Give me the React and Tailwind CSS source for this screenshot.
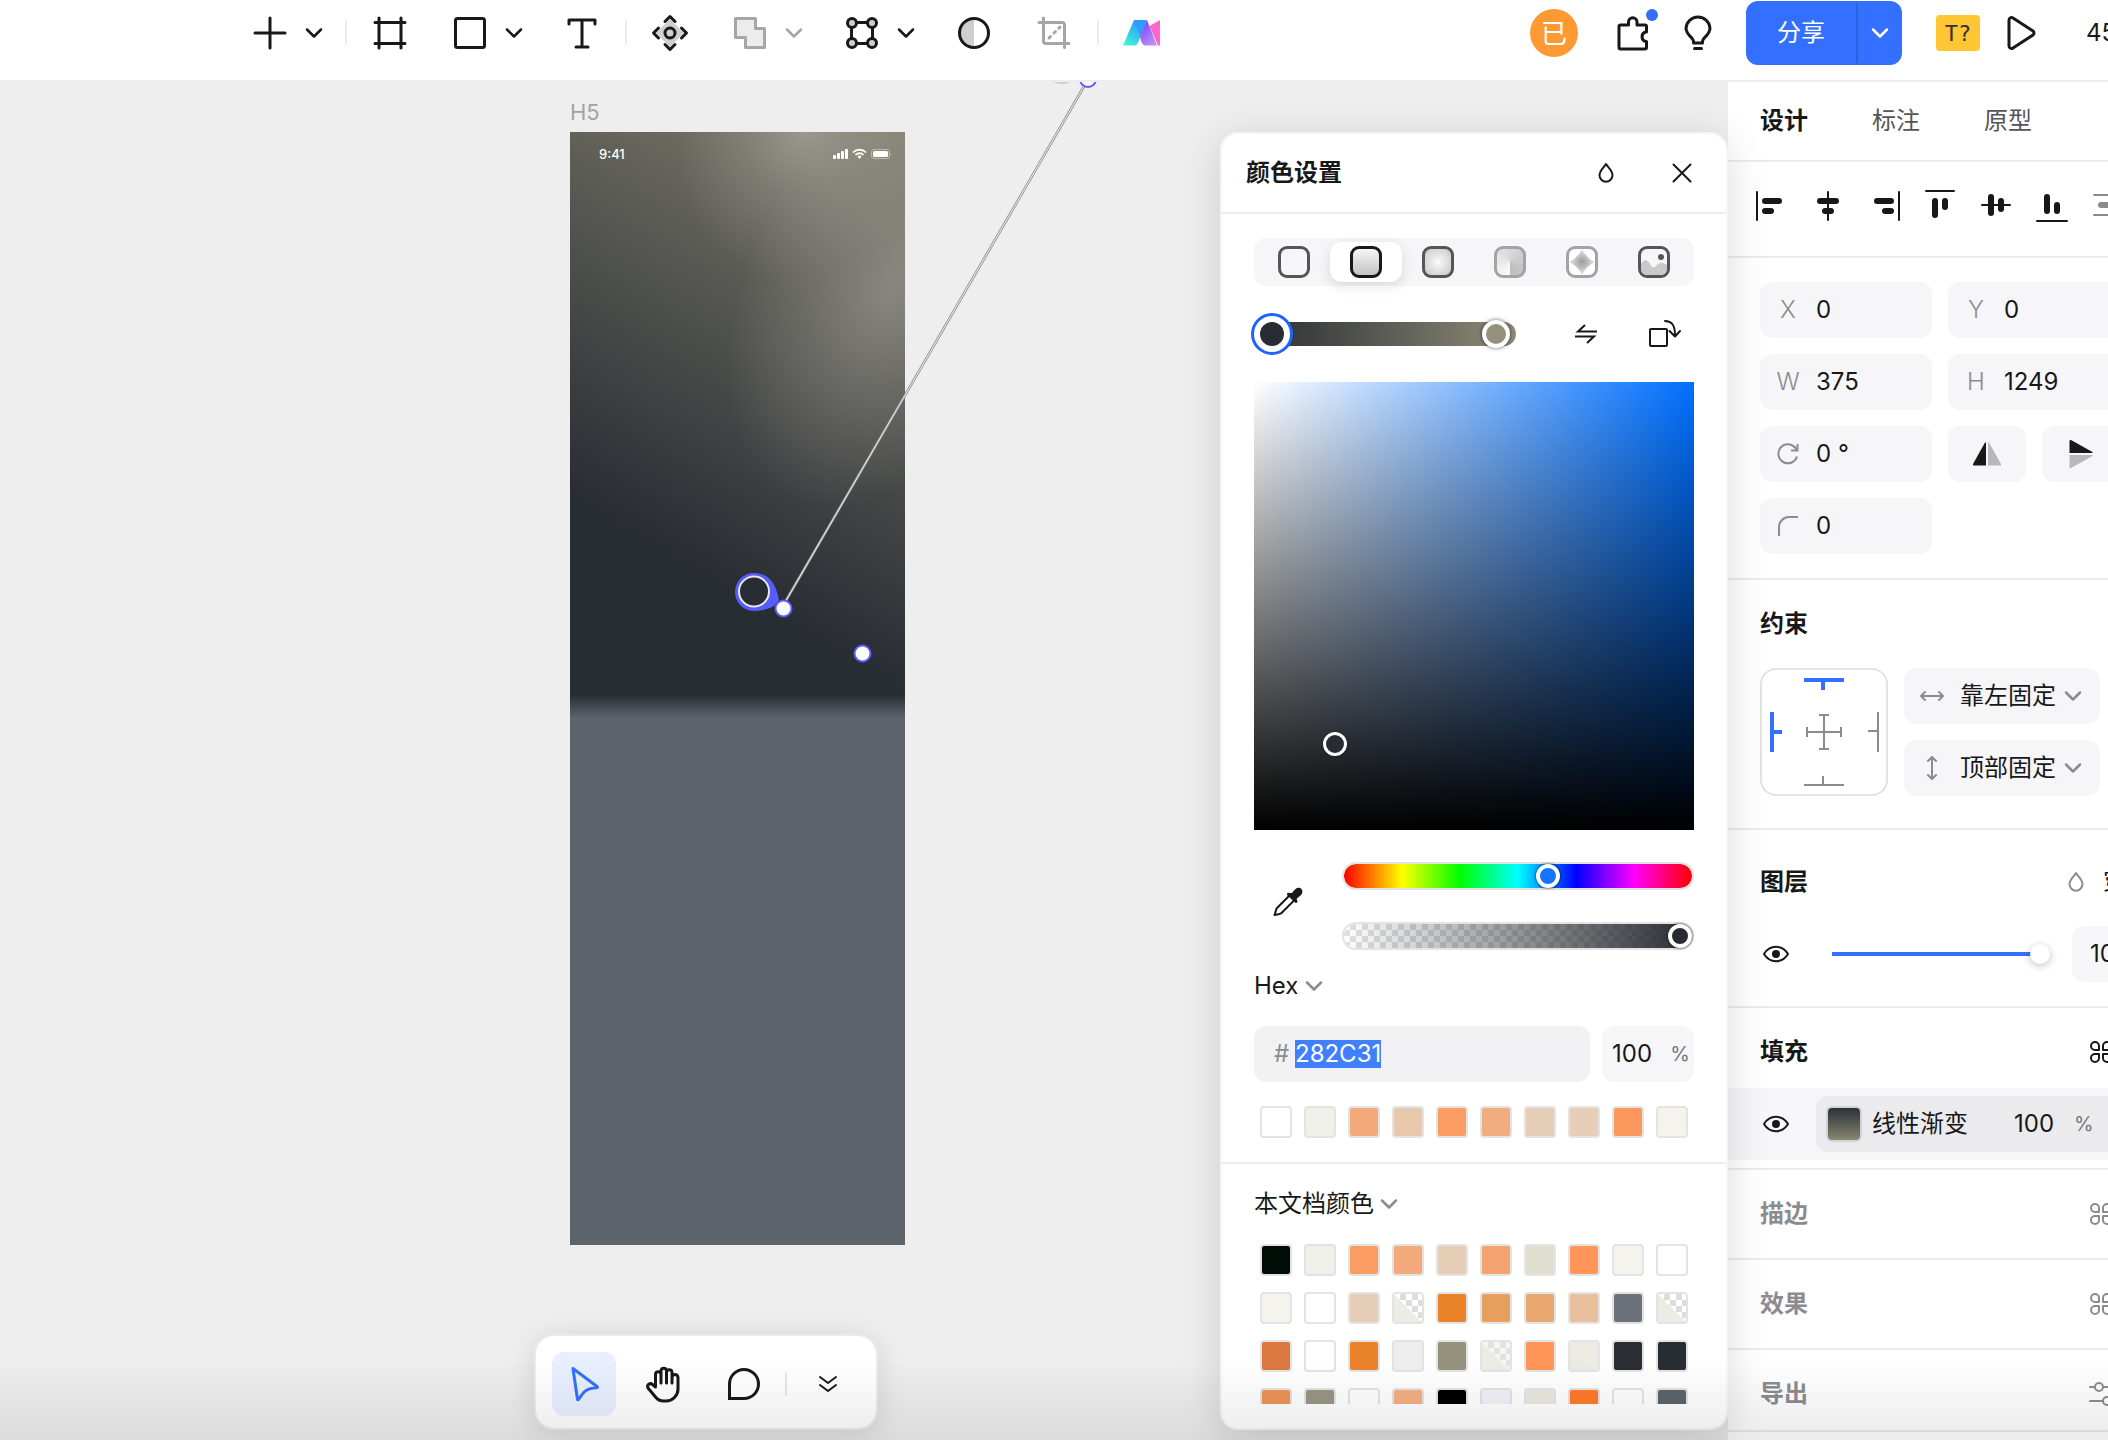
import React, { useEffect, useRef } from "react";

const Icon = ({ size = 32, w, h, className = "", sw = 3, children }) => (
    <svg
        width={w || size}
        height={h || size}
        viewBox={`0 0 ${w || size} ${h || size}`}
        fill="none"
        stroke="currentColor"
        strokeWidth={sw}
        strokeLinecap="round"
        strokeLinejoin="round"
        className={`shrink-0 ${className}`}
        aria-hidden="true"
    >
        {children}
    </svg>
);

const Chevron = ({ className = "" }) => (
    <Icon w={18} h={12} sw={2.5} className={className}>
        <path d="M2 2.5l7 7 7-7" />
    </Icon>
);

const Drop = ({ className = "" }) => (
    <Icon w={18} h={22} sw={2} className={className}>
        <path d="M9 2C7 5.500 2.500 8.500 2.500 13.200a6.500 6.500 0 0 0 13 0C15.500 8.500 11 5.500 9 2z" />
    </Icon>
);

const Eye = () => (
    <Icon w={32} h={20} sw={2}>
        <path d="M4 10C7 5 11 2.800 16 2.800S25 5 28 10c-3 5-7 7.200-12 7.200S7 15 4 10z" />
        <circle cx="16" cy="10" r="4" fill="currentColor" stroke="none" />
    </Icon>
);

const Tool = ({ label, className = "", children }) => (
    <button aria-label={label} className={`flex h-14 w-14 items-center justify-center ${className}`}>
        {children}
    </button>
);

const More = ({ label, className = "" }) => (
    <button aria-label={label} className={`flex h-14 w-8 items-center justify-center ${className}`}>
        <Chevron />
    </button>
);

const Separator = () => <div className="mx-[15px] h-6 w-[2px] shrink-0 bg-[#ebebeb]" />;

const Header = () => (
    <header className="flex h-[82px] shrink-0 items-center overflow-hidden border-b-2 border-[#ededed] bg-white pb-[14px] pl-[242px]">
        <div className="flex shrink-0 items-center">
            <Tool label="添加">
                <Icon size={34}><path d="M17 2v30M2 17h30" /></Icon>
            </Tool>
            <More label="更多添加" />
            <Separator />
            <Tool label="容器">
                <Icon size={34}><path d="M6 2v30M28 2v30M2 6.500h30M2 27.500h30" /></Icon>
            </Tool>
            <Tool label="矩形" className="ml-6">
                <Icon size={34}><rect x="2.500" y="2.500" width="29" height="29" rx="2" /></Icon>
            </Tool>
            <More label="更多形状" />
            <Tool label="文本" className="ml-6">
                <Icon size={34}><path d="M4 8V4h26v4M17 4v27M11 31h12" /></Icon>
            </Tool>
            <Separator />
            <Tool label="组件">
                <Icon size={38}>
                    <path d="M19 5l14 14-14 14L5 19z" fill="#cfcfcf" stroke="none" />
                    <path d="M14 7.500l5-5 5 5M14 30.500l5 5 5-5M7.500 14l-5 5 5 5M30.500 14l5 5-5 5" />
                    <circle cx="19" cy="19" r="5" />
                </Icon>
            </Tool>
            <Tool label="布尔运算" className="ml-6 text-[#a6a6a6]">
                <Icon size={34}>
                    <path d="M2.500 2.500h20v10h9v19H12.500V21.500h-10z" fill="#ececec" />
                </Icon>
            </Tool>
            <More label="更多布尔运算" className="text-[#a6a6a6]" />
            <Tool label="编辑路径" className="ml-6">
                <Icon size={34}>
                    <path d="M11 6.500h12M11 27.500h12M6.500 11v12M27.500 11v12" />
                    <circle cx="7" cy="7" r="4.500" fill="#cfcfcf" />
                    <circle cx="27" cy="7" r="4.500" fill="#cfcfcf" />
                    <circle cx="7" cy="27" r="4.500" fill="#cfcfcf" />
                    <circle cx="27" cy="27" r="4.500" fill="#cfcfcf" />
                </Icon>
            </Tool>
            <More label="更多路径" />
            <Tool label="蒙版" className="ml-6">
                <Icon size={34}>
                    <path d="M17 2.500a14.500 14.500 0 0 0 0 29z" fill="#cfcfcf" stroke="none" />
                    <circle cx="17" cy="17" r="14.500" />
                </Icon>
            </Tool>
            <Tool label="裁剪" className="ml-6 text-[#a6a6a6]">
                <Icon size={34}>
                    <path d="M2 6.500h23a2.500 2.500 0 0 1 2.500 2.500v22.500M6.500 2v23A2.500 2.500 0 0 0 9 27.500h23" />
                    <path d="M12 22l11-11" strokeDasharray="2 5" />
                </Icon>
            </Tool>
            <Separator />
            <Tool label="AI">
                <svg width="38" height="26" viewBox="0 0 38 26" aria-hidden="true">
                    <defs>
                        <linearGradient id="teal" x1="0" y1="1" x2=".6" y2="0">
                            <stop offset="0" stopColor="#3cffd8" />
                            <stop offset="1" stopColor="#3391ff" />
                        </linearGradient>
                        <linearGradient id="violet" x1="0" y1="0" x2=".6" y2="1">
                            <stop offset="0" stopColor="#7a38f5" />
                            <stop offset="1" stopColor="#b98cff" />
                        </linearGradient>
                    </defs>
                    <path d="M11 0h13l-7 18c-2 5-3 7.500-6 7.500H0z" fill="url(#teal)" />
                    <path d="M24 0l10 25.500H23c-3 0-4-2-5-5l-1-4z" fill="url(#violet)" />
                    <path d="M11 0h12.500l-6.500 16z" fill="#2f9dff" />
                    <path d="M26.500 6L37 0v25.500h-2z" fill="#ff66cc" />
                </svg>
            </Tool>
        </div>
        <div className="ml-auto flex w-[578px] shrink-0 items-center whitespace-nowrap">
            <div className="flex h-12 w-12 shrink-0 items-center justify-center rounded-full bg-[#ff9a33] text-[26px] text-white">已</div>
            <button aria-label="插件" className="relative ml-[35px] flex h-12 w-10 shrink-0 items-center justify-center">
                <Icon w={34} h={38}>
                    <path d="M3 12.500A1.500 1.500 0 0 1 4.500 11h8V8a4.200 4.200 0 0 1 8.500 0v3h8a1.500 1.500 0 0 1 1.500 1.500V18h-1a5 5 0 0 0 0 9.500h1v6a1.500 1.500 0 0 1-1.500 1.500h-24.500A1.500 1.500 0 0 1 3 33.500z" />
                </Icon>
                <span className="absolute -right-[5px] top-0 h-3 w-3 rounded-full bg-[#3370ff]" />
            </button>
            <button aria-label="帮助" className="ml-[25px] flex h-12 w-10 shrink-0 items-center justify-center">
                <Icon w={32} h={36}>
                    <path d="M11.500 28v-2c-.5-2.500-2.500-3.500-4.500-6A11.500 12.500 0 0 1 4 14 12 12 0 0 1 28 14a11.500 12.500 0 0 1-3 6c-2 2.500-4 3.500-4.500 6v2z" />
                    <path d="M12.500 33.500h7" />
                </Icon>
            </button>
            <div className="ml-7 flex h-16 w-[156px] shrink-0 rounded-xl bg-[#3370ff] text-2xl text-white">
                <button className="flex-1">分享</button>
                <div className="my-[2px] w-[2px] bg-[#2b5fe0]" />
                <button aria-label="分享选项" className="flex w-[44px] items-center justify-center">
                    <Chevron />
                </button>
            </div>
            <button className="ml-[34px] h-9 w-11 shrink-0 rounded bg-[#ffc633] font-['DejaVu_Sans_Mono',monospace] text-[22px] text-[#333333]">T?</button>
            <button aria-label="播放" className="ml-[26px] flex h-12 w-8 shrink-0 items-center justify-center">
                <Icon w={32} h={36}>
                    <path d="M3 5v26a2.500 2.500 0 0 0 4 2l20-13a2.500 2.500 0 0 0 0-4L7 3a2.500 2.500 0 0 0-4 2z" />
                </Icon>
            </button>
            <span className="ml-12 text-2xl">45%</span>
        </div>
    </header>
);

const PhoneFrame = () => (
    <section className="absolute left-[570px] top-[18px] w-[335px]">
        <h2 className="h-8 text-[22px] leading-6 text-[#a3a3a3]">H5</h2>
        <div className="relative h-[1113px] overflow-hidden bg-[#5c636a]">
            <div className="relative h-[586px] overflow-hidden bg-[linear-gradient(30deg,#282c33_28%,#96937d_120%)]">
                <div className="absolute -top-[150px] left-[110px] h-[300px] w-[250px] rotate-[20deg] bg-[radial-gradient(closest-side,rgba(255,255,255,0.26),rgba(255,255,255,0.12)_45%,transparent)]" />
                <div className="absolute -top-[70px] left-[175px] h-[460px] w-[290px] rotate-[26deg] bg-[radial-gradient(closest-side,rgba(185,180,175,0.42),rgba(185,180,175,0.2)_50%,transparent)]" />
                <div className="absolute inset-x-0 bottom-0 h-6 bg-linear-to-b from-transparent to-[#5c636a]" />
                <div className="relative flex items-center px-3 pt-[14px] text-white">
                    <span className="ml-[17px] text-[13px] leading-4 font-medium">9:41</span>
                    <svg className="ml-auto" width="60" height="12" viewBox="0 0 60 12" fill="#fff" aria-hidden="true">
                        <rect x="0" y="7" width="3" height="4" rx="1" />
                        <rect x="4" y="5" width="3" height="6" rx="1" />
                        <rect x="8" y="3" width="3" height="8" rx="1" />
                        <rect x="12" y="1" width="3" height="10" rx="1" />
                        <path d="M20 4.500a9 9 0 0 1 13 0M22.500 7a5.500 5.500 0 0 1 8 0" fill="none" stroke="#fff" strokeWidth="1.800" />
                        <path d="M24.500 8.500a3 3 0 0 1 4 0l-2 2.500z" />
                        <rect x="38.500" y="1.500" width="18" height="9" rx="2.500" fill="none" stroke="#fff" strokeOpacity=".4" />
                        <rect x="40" y="3" width="15" height="6" rx="1.500" />
                        <path d="M57.500 4.500v3a2 2 0 0 0 0-3z" fillOpacity=".4" />
                    </svg>
                </div>
            </div>
        </div>
    </section>
);

const GradientHandles = () => (
    <svg className="pointer-events-none absolute left-0 top-0 overflow-hidden" width="1200" height="640" viewBox="0 0 1200 640" aria-hidden="true">
        <ellipse cx="1062" cy="-1" rx="9" ry="3" fill="#cfcfcf" />
        <path d="M784 522L1086 1" stroke="#8f8f8f" strokeWidth="2.600" />
        <path d="M784 522L1086 1" stroke="#f4f4f4" strokeWidth="1" />
        <path d="M754 491c16 0 22 12 25 27l-5 6c-8 4-14 5-20 5a19 19 0 0 1 0-38z" fill="#575cff" />
        <circle cx="754" cy="509.500" r="15" fill="#282c33" stroke="#e8e8e8" strokeWidth="2" />
        <circle cx="783.500" cy="526.500" r="8" fill="#fff" stroke="#575cff" strokeWidth="2" />
        <circle cx="862.500" cy="571.500" r="8" fill="#fff" stroke="#575cff" strokeWidth="2" />
        <circle cx="1088" cy="-3" r="8" fill="#fff" stroke="#575cff" strokeWidth="2" />
    </svg>
);

const ModeBar = () => (
    <div className="absolute bottom-[10px] left-[534px] flex items-center rounded-[20px] border-2 border-[#ebebeb] bg-white bg-clip-padding px-4 pb-3 pt-4 shadow-[0_4px_30px_rgba(0,0,0,0.12)]">
        <button aria-label="选择" className="flex h-16 w-16 items-center justify-center rounded-xl bg-[#e8efff] text-[#3370ff]">
            <Icon w={32} h={38}>
                <path d="M5 3.500l24 18c1 .8.5 1-.5 1.200-9 .8-12 2-17.500 11.300-.8 1.200-1.500 1-1.600-.2z" />
            </Icon>
        </button>
        <button aria-label="移动画布" className="ml-4 flex h-16 w-16 items-center justify-center">
            <Icon w={38} h={38}>
                <path d="M10.500 21V9a2.800 2.800 0 0 1 5.500 0V18M16 17V5.500a2.800 2.800 0 0 1 5.500 0V18M21.500 17V7a2.800 2.800 0 0 1 5.500 0v11M27 17v-4.500a2.800 2.800 0 0 1 6 0V24a12 12 0 0 1-12 12h-2.500c-4 0-6-1.500-8-4L3 23c-1.500-3.500 2-5.500 4.500-3.500l3 2.500" />
            </Icon>
        </button>
        <button aria-label="评论" className="ml-4 flex h-16 w-16 items-center justify-center">
            <Icon size={34}><path d="M2.500 31.500V17A14.500 14.500 0 1 1 17 31.500z" strokeLinejoin="miter" /></Icon>
        </button>
        <div className="mx-[9px] h-6 w-[2px] bg-[#e6e6e6]" />
        <button aria-label="更多模式" className="flex h-16 w-16 items-center justify-center">
            <Icon size={20} sw={2}><path d="M2 3l8 6 8-6M2 11l8 6 8-6" /></Icon>
        </button>
    </div>
);

const recentColors = [
    "bg-white", "bg-[#f0f0ea]", "bg-[#f4a97a]", "bg-[#e8c8ab]", "bg-[#fb9c63]",
    "bg-[#f1ad80]", "bg-[#e6cdb5]", "bg-[#e7ceb6]", "bg-[#fc985e]", "bg-[#f4f3ee]",
];

const HALF = "bg-[linear-gradient(45deg,#ecece4_50%,transparent_50%),repeating-conic-gradient(#dddddd_0_25%,#ffffff_0_50%)] bg-[length:100%_100%,12px_12px]";
const HALF_SOFT = "bg-[linear-gradient(45deg,#ecece4_50%,transparent_50%),repeating-conic-gradient(#e2e2de_0_25%,#f6f6f2_0_50%)] bg-[length:100%_100%,12px_12px]";
const HALF_SOLID = "bg-[linear-gradient(45deg,#ebebe2_48%,#f1f1ea_50%,#ebebe2_52%)]";

const documentColors = [
    "bg-[#020d08]", "bg-[#f0f0ea]", "bg-[#fb9c63]", "bg-[#f4a97a]", "bg-[#e6cdb5]", "bg-[#f5a370]", "bg-[#e0decf]", "bg-[#ff9558]", "bg-[#f4f3ee]", "bg-white",
    "bg-[#f4f3ee]", "bg-white", "bg-[#e6cdb5]", HALF, "bg-[#e98229]", "bg-[#e89e5d]", "bg-[#e9a86f]", "bg-[#e9c09b]", "bg-[#6b7279]", HALF,
    "bg-[#dc7840]", "bg-white", "bg-[#e9822b]", "bg-[#eeeeee]", "bg-[#94917c]", HALF_SOFT, "bg-[#ff9558]", HALF_SOLID, "bg-[#2a2d34]", "bg-[#282c33]",
    "bg-[#ed9357]", "bg-[#989584]", "bg-white", "bg-[#f3b083]", "bg-black", "bg-[#f0f1f7]", "bg-[#e8e8de]", "bg-[#ff7b29]", "bg-[#fcfffd]", "bg-[#5c636a]",
];

const Swatches = ({ colors }) => (
    <div className="grid grid-cols-[repeat(10,32px)] justify-between gap-y-4 px-[6px]">
        {colors.map((color, i) => (
            <button key={i} aria-label={`颜色 ${i + 1}`} className={`h-8 w-8 rounded border-2 border-[#e3e3e4] bg-origin-content ${color}`} />
        ))}
    </div>
);

const fillTypes = [
    { name: "纯色", box: "border-[#555555]" },
    { name: "线性渐变", box: "border-[#181818] bg-linear-to-b from-[#f6f6f6] to-[#c4c4c4]", active: true },
    { name: "径向渐变", box: "border-[#555555] bg-[radial-gradient(#fafafa,#c6c6c6)]" },
    { name: "角度渐变", box: "border-[#a2a3a6] bg-[conic-gradient(#d8d8d8,#bcbcbc_50%,#fafafa_50%,#d8d8d8)]" },
    { name: "菱形渐变", box: "border-[#a2a3a6] bg-white", diamond: true },
    { name: "图片", box: "border-[#555555]", image: true },
];

const PickerSlider = ({ label, track, ...props }) => (
    <input
        type="range"
        aria-label={label}
        className={`block h-7 w-full appearance-none rounded-full border-2 border-[#e3e3e4] bg-clip-padding [&::-webkit-slider-thumb]:h-6 [&::-webkit-slider-thumb]:w-6 [&::-webkit-slider-thumb]:appearance-none [&::-webkit-slider-thumb]:rounded-full [&::-webkit-slider-thumb]:border-4 [&::-webkit-slider-thumb]:border-white [&::-webkit-slider-thumb]:shadow-[0_0_2px_1px_rgba(0,0,0,0.4)] ${track}`}
        {...props}
    />
);

const ColorPanel = () => {
    const hexRef = useRef(null);

    useEffect(() => {
        hexRef.current.focus();
        hexRef.current.select();
    }, []);

    return (
        <aside className="absolute bottom-[10px] right-0 top-[50px] z-10 w-[508px] overflow-hidden rounded-[18px] border-2 border-[#f5f5f5] bg-white shadow-[0_8px_40px_rgba(0,0,0,0.14)]">
            <div className="flex h-20 items-center border-b-2 border-[#ededed] pl-6 pr-5">
                <h2 className="text-2xl font-bold">颜色设置</h2>
                <button aria-label="混合模式" className="ml-auto flex h-12 w-12 items-center justify-center">
                    <Drop />
                </button>
                <button aria-label="关闭" className="ml-7 flex h-12 w-12 items-center justify-center">
                    <Icon size={20} sw={2}><path d="M1.500 1.500l17 17M18.500 1.500l-17 17" /></Icon>
                </button>
            </div>

            <div className="border-b-2 border-[#ededed] px-8 py-6">
                <div className="flex h-12 rounded-xl bg-[#f6f6f9] p-1">
                    {fillTypes.map((type) => (
                        <button
                            key={type.name}
                            aria-label={type.name}
                            className={`flex flex-1 items-center justify-center rounded-xl ${type.active ? "bg-white shadow-[0_4px_14px_rgba(0,0,0,0.12)]" : ""}`}
                        >
                            <span className={`relative block h-8 w-8 overflow-hidden rounded-[9px] border-3 ${type.box}`}>
                                {type.diamond && (
                                    <svg width="26" height="26" viewBox="0 0 26 26" aria-hidden="true">
                                        <defs>
                                            <radialGradient id="dia">
                                                <stop offset="0" stopColor="#9c9c9c" />
                                                <stop offset="1" stopColor="#e6e6e6" />
                                            </radialGradient>
                                        </defs>
                                        <path d="M13 0q4 9 13 13-9 4-13 13Q9 17 0 13 9 9 13 0z" fill="url(#dia)" />
                                    </svg>
                                )}
                                {type.image && (
                                    <svg width="26" height="26" viewBox="0 0 26 26" aria-hidden="true">
                                        <path d="M0 15c3-5 6-5 9 0s4 4 7 1 5-3 10 0v10H0z" fill="#c9c9c9" />
                                        <circle cx="20" cy="8" r="3" fill="#555" />
                                    </svg>
                                )}
                            </span>
                        </button>
                    ))}
                </div>

                <div className="mt-6 flex h-12 items-center">
                    <div className="relative h-6 w-[262px] rounded-full bg-linear-to-r from-[#2b2e33] to-[#8f8d77]">
                        <button aria-label="起始色" className="absolute -left-[3px] -top-[9px] h-[42px] w-[42px] rounded-full border-3 border-[#1f62ff] bg-white p-[6px]">
                            <span className="block h-6 w-6 rounded-full bg-[#282c33]" />
                        </button>
                        <button aria-label="结束色" className="absolute -top-[2px] right-[6px] h-7 w-7 rounded-full border-4 border-white bg-[#94917c] shadow-[0_0_4px_rgba(0,0,0,0.6)]" />
                    </div>
                    <button aria-label="交换渐变" className="ml-[46px] flex h-12 w-12 items-center justify-center">
                        <Icon size={24} sw={2}><path d="M11 3L4 9.500h19M1 14.500h19L13 21" strokeLinecap="butt" strokeLinejoin="miter" /></Icon>
                    </button>
                    <button aria-label="旋转渐变" className="ml-[30px] flex h-12 w-12 items-center justify-center">
                        <Icon w={34} h={30} sw={2}>
                            <rect x="3" y="10" width="17" height="17" rx="1" />
                            <path d="M18 2c6 0 10 3 10 14M22.500 12l5.500 5.500 5-5.500" />
                        </Icon>
                    </button>
                </div>

                <div className="relative mt-6 h-[448px] bg-[linear-gradient(to_top,#000000,transparent),linear-gradient(to_right,#ffffff,#006fff)]">
                    <button aria-label="取色点" className="absolute left-[69px] top-[350px] h-6 w-6 rounded-full border-3 border-white bg-[#282c31] shadow-[0_0_2px_rgba(0,0,0,0.5)]" />
                </div>

                <div className="mt-8 flex items-center gap-5">
                    <button aria-label="吸管" className="flex h-12 w-[68px] items-center justify-center pb-2">
                        <Icon size={32} sw={2}>
                            <path d="M17.500 9.500L5 22c-1.500 1.500-1 4-2.500 7 3-.8 5.500-.5 7-2L22 14.500" />
                            <path d="M20 7c3-4 5-6 8-5s3 5 1 7l-4.500 4 .8 1.500c.8 2-1 3-2.300 2L15.500 9.500c-1.500-2 .5-3.500 2-2.500z" fill="currentColor" stroke="none" />
                        </Icon>
                    </button>
                    <div className="flex flex-1 flex-col gap-8">
                        <PickerSlider
                            label="色相"
                            min="0"
                            max="360"
                            defaultValue="213"
                            track="bg-[linear-gradient(to_right,#ff0000,#ffff00,#00ff00,#00ffff,#0000ff,#ff00ff,#ff0000)] [&::-webkit-slider-thumb]:bg-[#1473ff]"
                        />
                        <PickerSlider
                            label="不透明度"
                            min="0"
                            max="100"
                            defaultValue="100"
                            track="bg-[linear-gradient(to_right,transparent,#282c31),repeating-conic-gradient(#e0e0e0_0_25%,#ffffff_0_50%)] bg-[length:100%_100%,12px_12px] [&::-webkit-slider-thumb]:bg-[#282c31]"
                        />
                    </div>
                </div>

                <label className="mt-5 flex h-8 w-fit items-center gap-[6px] text-2xl">
                    <select aria-label="颜色格式" className="appearance-none bg-transparent">
                        <option>Hex</option>
                    </select>
                    <Chevron className="text-[#8c8c90]" />
                </label>

                <div className="mt-6 flex gap-3 text-2xl">
                    <label className="flex h-14 min-w-0 flex-1 items-center rounded-xl bg-[#f2f2f5] pl-5">
                        <span className="w-[21px] text-[#8c8c90]">#</span>
                        <input
                            ref={hexRef}
                            aria-label="色值"
                            defaultValue="282C31"
                            className="min-w-0 flex-1 bg-transparent leading-7 outline-none selection:bg-[#4080ff] selection:text-white"
                        />
                    </label>
                    <label className="flex h-14 w-[92px] items-center rounded-xl bg-[#f6f6f9] pl-[10px] pr-1">
                        <input aria-label="不透明度数值" defaultValue="100" className="min-w-0 flex-1 bg-transparent outline-none" />
                        <span className="text-xl text-[#77777b]">%</span>
                    </label>
                </div>

                <div className="mt-6">
                    <Swatches colors={recentColors} />
                </div>
            </div>

            <div className="px-8 pt-6">
                <label className="flex h-8 w-fit items-center gap-[6px] text-2xl">
                    <select aria-label="颜色来源" className="appearance-none bg-transparent">
                        <option>本文档颜色</option>
                    </select>
                    <Chevron className="text-[#8c8c90]" />
                </label>
                <div className="mt-6 h-40 overflow-hidden">
                    <Swatches colors={documentColors} />
                </div>
            </div>
        </aside>
    );
};

const AlignIcons = [
    ["左对齐", <><path d="M1 2v28" strokeWidth="2" /><path d="M9 11h14M9 21h6" /></>],
    ["水平居中", <><path d="M16 2v28" strokeWidth="2" /><path d="M8 11h16M13 21h6" /></>],
    ["右对齐", <><path d="M31 2v28" strokeWidth="2" /><path d="M9 11h14M17 21h6" /></>],
    ["顶对齐", <><path d="M2 1h28" strokeWidth="2" /><path d="M11 11v14M21 11v6" /></>],
    ["垂直居中", <><path d="M2 15h28" strokeWidth="2" /><path d="M11 7v16M21 11v8" /></>],
    ["底对齐", <><path d="M1 31h30" strokeWidth="2" /><path d="M11 7v14M21 15v6" /></>],
];

const Field = ({ label, icon, value }) => (
    <label className="flex h-14 w-[172px] shrink-0 items-center rounded-xl bg-[#f6f6f9] text-2xl">
        <span className="flex w-14 shrink-0 justify-center font-light text-[#8c8c90]">{icon || label}</span>
        <input aria-label={label} defaultValue={value} className="w-[100px] bg-transparent outline-none" />
    </label>
);

const PinSelect = ({ label, value, children }) => (
    <label className="flex h-14 w-[196px] items-center rounded-xl bg-[#f6f6f9] text-2xl">
        <span className="flex w-14 shrink-0 justify-center text-[#8c8c90]">{children}</span>
        <select aria-label={label} className="w-[104px] appearance-none bg-transparent">
            <option>{value}</option>
        </select>
        <Chevron className="text-[#8c8c90]" />
    </label>
);

const Styles = () => (
    <Icon size={24} sw={2}>
        <path d="M10 10H6a4 4 0 1 1 4-4zM14 10V6a4 4 0 1 1 4 4zM10 14v4a4 4 0 1 1-4-4zM14 14h4a4 4 0 1 1-4 4z" />
    </Icon>
);

const EmptySection = ({ title, children, className = "h-[90px]" }) => (
    <section className={`border-b-2 border-[#ebebeb] text-[#8c8c90] ${className}`}>
        <div className="flex h-[88px] items-center pl-8">
            <h3 className="w-[329px] shrink-0 text-2xl font-bold">{title}</h3>
            <button aria-label={`${title}样式`}>{children}</button>
        </div>
    </section>
);

const Sidebar = () => (
    <aside className="w-[380px] shrink-0 overflow-hidden bg-white whitespace-nowrap">
        <nav className="flex h-20 items-center gap-16 border-b-2 border-[#ebebeb] pl-8 text-2xl">
            <button className="font-bold">设计</button>
            <button className="text-[#555555]">标注</button>
            <button className="text-[#555555]">原型</button>
        </nav>

        <div className="flex h-24 items-center gap-6 border-b-2 border-[#ebebeb] pb-[6px] pl-7">
            {AlignIcons.map(([name, shape]) => (
                <button key={name} aria-label={name}>
                    <Icon size={32} sw={6}>{shape}</Icon>
                </button>
            ))}
            <button aria-label="分布" className="text-[#8c8c90]">
                <Icon size={32} sw={6}><path d="M2 5h28M2 25h28" strokeWidth="2" /><path d="M9 15h14" /></Icon>
            </button>
        </div>

        <section className="flex flex-col gap-4 border-b-2 border-[#ebebeb] py-6 pl-8">
            <div className="flex gap-4">
                <Field label="X" value="0" />
                <Field label="Y" value="0" />
            </div>
            <div className="flex gap-4">
                <Field label="W" value="375" />
                <Field label="H" value="1249" />
            </div>
            <div className="flex gap-4">
                <Field
                    label="旋转"
                    value="0 °"
                    icon={
                        <Icon size={24} sw={2}>
                            <path d="M21 14.500a9.500 9.500 0 1 1-2-9l2 2.500M21.500 2v6.500H15" strokeLinecap="butt" strokeLinejoin="miter" />
                        </Icon>
                    }
                />
                <button aria-label="水平翻转" className="flex h-14 w-[78px] shrink-0 items-center justify-center rounded-xl bg-[#f6f6f9]">
                    <svg width="30" height="24" viewBox="0 0 30 24" aria-hidden="true">
                        <path d="M13 0.500h1v23H2q-1.500 0-1-1.500z" fill="#181818" />
                        <path d="M16 0.500h1L29 22q.5 1.500-1 1.500H16z" fill="#b8b8bc" />
                    </svg>
                </button>
                <button aria-label="垂直翻转" className="flex h-14 w-[78px] shrink-0 items-center justify-center rounded-xl bg-[#f6f6f9]">
                    <svg width="24" height="30" viewBox="0 0 24 30" aria-hidden="true">
                        <path d="M0.500 2q0-1.500 1.500-1L23.500 13v1H.5z" fill="#181818" />
                        <path d="M0.500 16h23v1L2 29q-1.500.5-1.500-1z" fill="#b8b8bc" />
                    </svg>
                </button>
            </div>
            <Field
                label="圆角"
                value="0"
                icon={<Icon size={24} sw={2}><path d="M3 22v-9a10 10 0 0 1 10-10h9" strokeLinecap="butt" /></Icon>}
            />
        </section>

        <section className="border-b-2 border-[#ebebeb] pb-8 pl-8">
            <h3 className="flex h-[88px] items-center text-2xl font-bold">约束</h3>
            <div className="flex gap-4">
                <div className="h-32 w-32 shrink-0 rounded-2xl border-2 border-[#e3e3e4]">
                    <svg width="124" height="124" viewBox="2 2 124 124" fill="none" aria-hidden="true">
                        <path d="M44 12h40M63 12v10M12 44v40M12 64h10" stroke="#3370ff" strokeWidth="4" />
                        <path d="M118 44v40M108 63h10M44 117h40M63 108v9M46 64h36M47 59v10M81 59v10M64 46v36M59 47h10M59 81h10" stroke="#8c8c90" strokeWidth="2" />
                    </svg>
                </div>
                <div className="flex flex-col gap-4">
                    <PinSelect label="水平约束" value="靠左固定">
                        <Icon size={24} sw={2}><path d="M1 12h22M5 8l-4 4 4 4M19 8l4 4-4 4" /></Icon>
                    </PinSelect>
                    <PinSelect label="垂直约束" value="顶部固定">
                        <Icon size={24} sw={2}><path d="M12 1v22M8 5l4-4 4 4M8 19l4 4 4-4" /></Icon>
                    </PinSelect>
                </div>
            </div>
        </section>

        <section className="border-b-2 border-[#ebebeb] pb-6 pl-8 pt-2 text-2xl">
            <div className="flex h-[88px] items-center">
                <h3 className="w-[307px] shrink-0 font-bold">图层</h3>
                <Drop className="text-[#8c8c90]" />
                <span className="ml-[18px]">穿透</span>
            </div>
            <div className="flex items-center">
                <button aria-label="图层可见"><Eye /></button>
                <input
                    type="range"
                    aria-label="图层不透明度"
                    min="0"
                    max="100"
                    defaultValue="100"
                    className="ml-10 h-5 w-[218px] shrink-0 appearance-none bg-[linear-gradient(#3370ff,#3370ff)] bg-[length:208px_4px] bg-[position:left_center] bg-no-repeat [&::-webkit-slider-thumb]:h-5 [&::-webkit-slider-thumb]:w-5 [&::-webkit-slider-thumb]:appearance-none [&::-webkit-slider-thumb]:rounded-full [&::-webkit-slider-thumb]:bg-white [&::-webkit-slider-thumb]:shadow-[0_2px_8px_rgba(0,0,0,0.25)]"
                />
                <label className="ml-[22px] flex h-14 w-24 shrink-0 items-center rounded-xl bg-[#f6f6f9] pl-[18px]">
                    <input aria-label="图层不透明度数值" defaultValue="100" className="w-16 bg-transparent outline-none" />
                </label>
            </div>
        </section>

        <section className="border-b-2 border-[#ebebeb] pb-2 text-2xl">
            <div className="flex h-20 items-center pl-8 pt-2">
                <h3 className="w-[329px] shrink-0 font-bold">填充</h3>
                <button aria-label="填充样式"><Styles /></button>
            </div>
            <div className="flex h-[72px] items-center bg-[#f6f6f9] pl-8">
                <button aria-label="填充可见"><Eye /></button>
                <div className="ml-6 flex h-14 w-[320px] shrink-0 items-center rounded-xl bg-[#ebebed] pl-[10px]">
                    <button aria-label="填充颜色" className="h-9 w-9 shrink-0 rounded-md border-2 border-[#d3d3d6] bg-linear-to-b from-[#282c33] to-[#8f8d77] bg-origin-border" />
                    <span className="ml-[10px] w-[142px] shrink-0">线性渐变</span>
                    <input aria-label="填充不透明度" defaultValue="100" className="w-[60px] bg-transparent outline-none" />
                    <span className="text-xl text-[#77777b]">%</span>
                </div>
            </div>
        </section>

        <EmptySection title="描边"><Styles /></EmptySection>
        <EmptySection title="效果"><Styles /></EmptySection>
        <EmptySection title="导出" className="h-[82px]">
            <Icon size={28} sw={2}>
                <path d="M1 7h4M15 7h12M1 21h12M23 21h4" />
                <circle cx="10" cy="7" r="4" />
                <circle cx="18" cy="21" r="4" />
            </Icon>
        </EmptySection>
    </aside>
);

const App = () => {
    return (
        <div className="relative flex h-screen flex-col overflow-hidden bg-[#eeeeee] font-['Inter','Noto_Sans_CJK_SC',sans-serif] text-[#181818]">
            <Header />
            <div className="flex min-h-0 flex-1">
                <main className="relative min-w-0 flex-1">
                    <PhoneFrame />
                    <GradientHandles />
                    <ModeBar />
                    <ColorPanel />
                </main>
                <Sidebar />
            </div>
            <div className="pointer-events-none absolute inset-x-0 bottom-0 z-20 h-20 bg-linear-to-b from-transparent to-black/8" />
        </div>
    );
};
export default App;
